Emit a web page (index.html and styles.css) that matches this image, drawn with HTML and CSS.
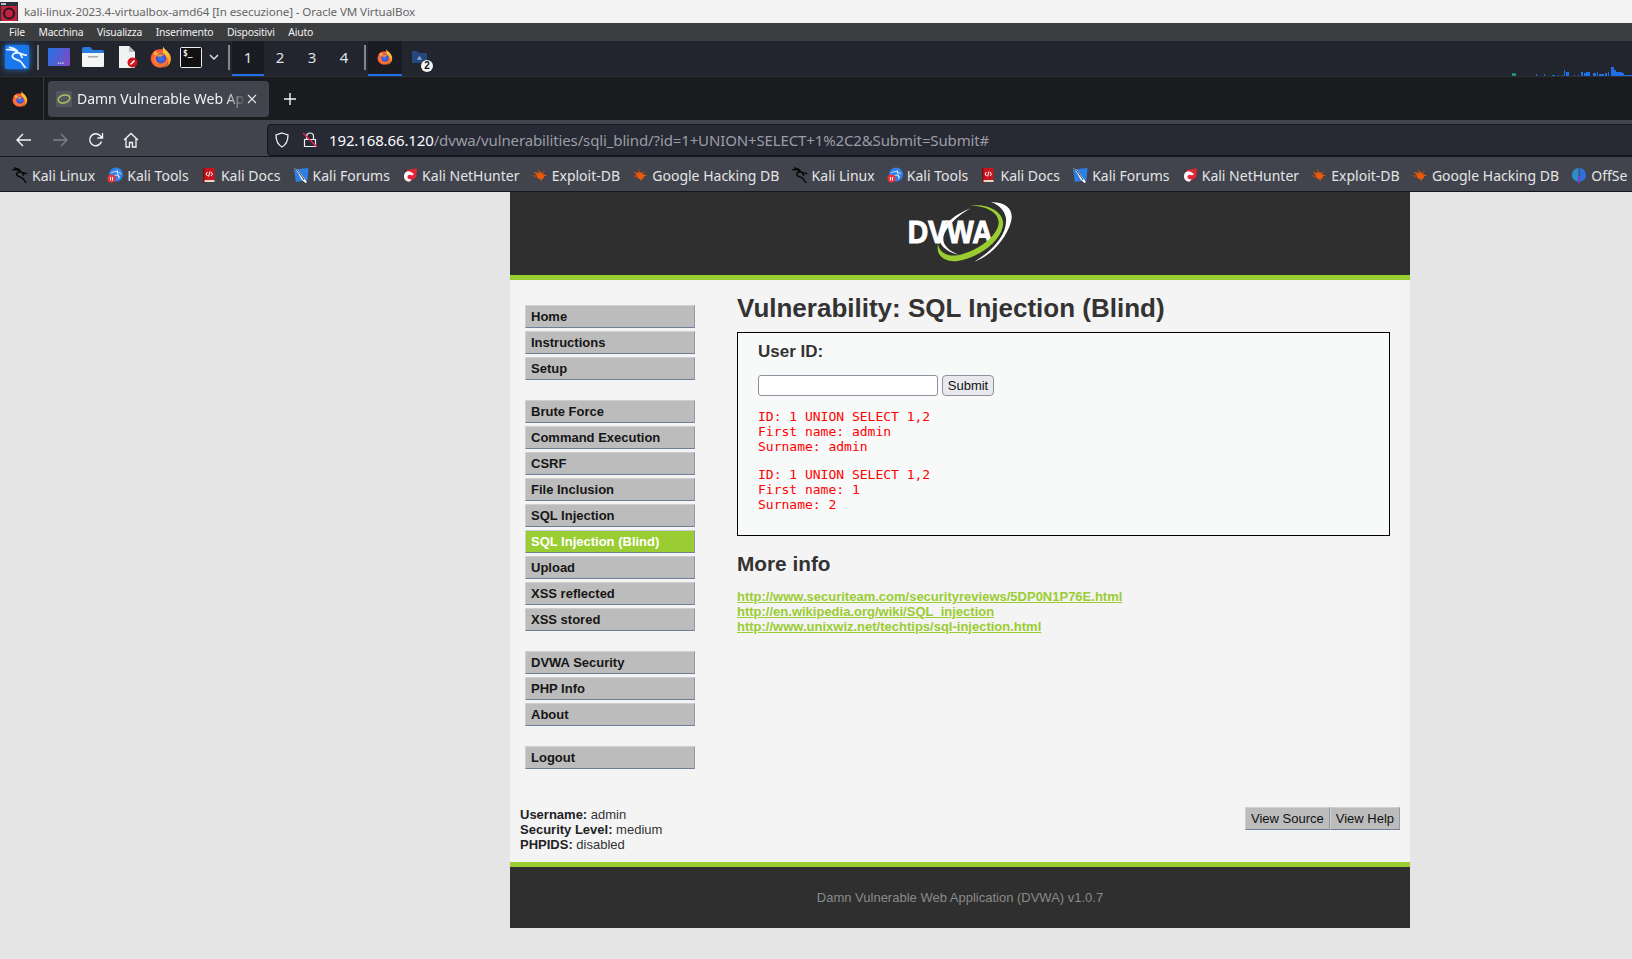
FILE: index.html
```html
<!DOCTYPE html>
<html lang="it">
<head>
<meta charset="utf-8">
<title>kali-linux-2023.4-virtualbox-amd64</title>
<link rel="stylesheet" href="styles.css">
</head>
<body>
<svg class="defs" width="0" height="0" aria-hidden="true">
  <defs>
    <radialGradient id="fxOuter" cx="0.5" cy="0.55" r="0.65">
      <stop offset="0" stop-color="#ff9a2a"/><stop offset="0.6" stop-color="#ff6a35"/><stop offset="1" stop-color="#e22b50"/>
    </radialGradient>
    <linearGradient id="fxFlame" x1="0" y1="0" x2="0" y2="1">
      <stop offset="0" stop-color="#ffd53a"/><stop offset="1" stop-color="#ff8f1e"/>
    </linearGradient>
    <radialGradient id="fxInner" cx="0.5" cy="0.5" r="0.6">
      <stop offset="0" stop-color="#3f7ff0"/><stop offset="1" stop-color="#3a3fc0"/>
    </radialGradient>
    <linearGradient id="deskGrad" x1="0" y1="0.3" x2="1" y2="0.7">
      <stop offset="0" stop-color="#2a6fe2"/><stop offset="1" stop-color="#7a4cc4"/>
    </linearGradient>
    <symbol id="firefox" viewBox="0 0 24 24">
      <circle cx="11" cy="13.500" r="10.300" fill="url(#fxOuter)"/>
      <path d="M14.500 .5c.5 3 4.500 4 7 8.500 2.300 4.500 1.500 9-1.500 12-1.800 1.800-4 2.500-6 2.500 4-1 6.500-4 6-8-.5-4-4-5-5.500-8C14 5.500 13.500 3 14.500 .5z" fill="url(#fxFlame)"/>
      <path d="M3.500 8c.8-1.700 2-2.800 3.500-3.500L6.800 7.500l3.500.5L6 10.500z" fill="#ffb32a"/>
      <circle cx="12" cy="13.500" r="5.600" fill="url(#fxInner)"/>
      <path d="M6.500 11c2.500-2.500 6.500-3 9-1.300l-3.500 1.800c-2 .5-4 0-5.500-.5z" fill="#ff8a3a"/>
    </symbol>
    <symbol id="dragon" viewBox="0 0 24 24">
      <path d="M1 4C6 3.500 11 5 14 7.500c2.500 1.500 5 1.800 8 2.500M14 7.500C10 7 6.500 8.500 7 11.500c.5 3 6 3 9 5.500 2 1.700 2.500 4 5 6.500M4 1.500C7 2 10 3 12 5M15 8c1 1.500 2 3 2.500 4.500" fill="none" stroke="currentColor" stroke-width="2" stroke-linecap="round"/>
    </symbol>
    <symbol id="bug" viewBox="0 0 20 20">
      <path d="M2 6l5 1.500C9 6 12 6.500 14 9l5 2-4 .5c0 2.500-1.500 4-3.500 3.500l1 3-3-3C7 14.500 5.500 12.500 6 10z" fill="#e8590c"/>
      <path d="M1 11l5-1-1 3zM8 2l2 4.500L7.500 6zM16 5l-2 3.500-1.500-1.500z" fill="#c2490c"/>
    </symbol>
    <symbol id="tools" viewBox="0 0 16 16">
      <circle cx="9" cy="7.500" r="7" fill="#2f80e8"/>
      <path d="M4 6c3-2 7-2 10 1M7 9c2-1.500 4-1 6 1M10 3l2 9" stroke="#cfe3fb" fill="none" stroke-width="1"/>
      <circle cx="4.500" cy="11.500" r="4" fill="#e33"/>
      <path d="M3 10h1v3.500H3zM5 10h1v3.500H5z" fill="#fff"/>
    </symbol>
    <symbol id="docs" viewBox="0 0 16 16">
      <path d="M3 1h10.500v12H3z" fill="#c8141c"/>
      <path d="M3 13h10.500v2H3z" fill="#e9d9c8"/>
      <path d="M2 1h1.500v15H2z" fill="#7a1015"/>
      <path d="M6.500 5L5 7l1.500 2M10 5l1.500 2L10 9M9 4.500L7.500 9.500" stroke="#fff" fill="none" stroke-width="1"/>
    </symbol>
    <symbol id="forums" viewBox="0 0 16 16">
      <path d="M1 2.500L15.500 1l-1 12L3 15z" fill="#2d7fe6"/>
      <path d="M1 1l4 2 6 8 3 4-1.500 1-4-3.500-3-6z" fill="#fff"/>
      <path d="M2 2l3 2 5 7 1 2" stroke="#222" stroke-width=".9" fill="none"/>
    </symbol>
    <symbol id="hunter" viewBox="0 0 16 16">
      <path d="M4 3l11-1.500-1 9L7 15 2 12z" fill="#e32636"/>
      <path d="M2 9c0-4 4-6 7-4l3 2-2 1.500C8 7 5.500 7.500 5.500 10c0 2 2 2.500 4 2L8 14.500C5 15 2 13 2 9z" fill="#fff"/>
      <path d="M1 2l4 1-1 2z" fill="#333"/>
    </symbol>
    <symbol id="offsec" viewBox="0 0 16 16">
      <path d="M7.500 1C3 1.500 1 4.500 1 8s2 6 6.500 6.500z" fill="#2d8fc4"/>
      <path d="M8.500 1C13 1.500 15 4.500 15 8s-2 6-6.500 6.500z" fill="#2f6fd8"/>
      <path d="M7 9h2v7H7z" fill="#7a3fd0"/>
    </symbol>
  </defs>
</svg>

<header class="titlebar">
  <svg class="vbox" width="18" height="19" viewBox="0 0 18 19"><rect width="18" height="19" fill="#2a2f38"/><rect x="1" y="4" width="16" height="15" fill="#c4213f"/><circle cx="9" cy="11.500" r="5" fill="none" stroke="#1c1c20" stroke-width="2"/><rect x="1" y="1" width="5" height="2" fill="#bbb"/></svg>
  <span class="titletext">kali-linux-2023.4-virtualbox-amd64 [In esecuzione] - Oracle VM VirtualBox</span>
</header>
<nav class="menubar">
  <span>File</span><span>Macchina</span><span>Visualizza</span><span>Inserimento</span><span>Dispositivi</span><span>Aiuto</span>
</nav>

<div class="panel">
  <div class="launcher">
    <svg class="kalibtn" width="24" height="24"><rect width="24" height="24" rx="1.500" fill="#1a78ee"/><use href="#dragon" width="22" height="22" x="1" y="1"/></svg>
    <i class="vsep"></i>
    <svg class="pi desk" width="22" height="18" viewBox="0 0 22 18"><rect width="22" height="18" rx="1" fill="url(#deskGrad)"/><path d="M10 14.500h1.200v1.200H10zM12.200 14.500h1.200v1.200h-1.200zM14.400 14.500h1.200v1.200h-1.200z" fill="#e6ebff"/></svg>
    <svg class="pi files" width="22" height="20" viewBox="0 0 22 20"><path d="M0 2a2 2 0 0 1 2-2h6l3 3h9a2 2 0 0 1 2 2v3H0z" fill="#2a7be0"/><path d="M0 6h22v13a1 1 0 0 1-1 1H1a1 1 0 0 1-1-1z" fill="#f4f4f4"/><rect x="6" y="9" width="10" height="1.500" fill="#aaa"/></svg>
    <svg class="pi doc" width="20" height="22" viewBox="0 0 20 22"><path d="M1 0h10l6 6v15a1 1 0 0 1-1 1H1z" fill="#f2f2f2"/><path d="M11 0l6 6h-6z" fill="#bbb"/><circle cx="14.500" cy="16.500" r="5" fill="#d0141c"/><path d="M12.500 18.500l4-4" stroke="#fff" stroke-width="1.600"/></svg>
    <svg class="pi fxi" width="22" height="22"><use href="#firefox"/></svg>
    <svg class="pi term" width="22" height="21" viewBox="0 0 22 21"><rect x=".5" y=".5" width="21" height="20" rx="1" fill="#111" stroke="#eee"/><text class="termtext" x="3" y="9">$_</text></svg>
    <svg class="pi chev" width="10" height="6" viewBox="0 0 10 6"><path d="M1 1l4 4 4-4" fill="none" stroke="#ddd" stroke-width="1.500"/></svg>
    <i class="vsep sep2"></i>
  </div>
  <div class="spaces">
    <span class="space on">1</span><span class="space">2</span><span class="space">3</span><span class="space">4</span>
  </div>
  <div class="sep3wrap"><i class="vsep sep3"></i></div>
  <div class="task on"><svg width="16" height="16"><use href="#firefox"/></svg></div>
  <div class="task folder">
    <svg width="15" height="12" viewBox="0 0 15 12"><path d="M0 1a1 1 0 0 1 1-1h4l2 2h7a1 1 0 0 1 1 1v8a1 1 0 0 1-1 1H1a1 1 0 0 1-1-1z" fill="#24477f"/><path d="M7.500 5l2 2v2h-4V7z" fill="#7f9ac8"/></svg>
    <span class="badge">2</span>
  </div>
  <svg class="netgraph" width="120" height="9" viewBox="0 0 120 9"><rect x="0" y="6.500" width="4" height="2" fill="#1abc9c"/><path d="M24 7h1v2h-1zM32 7h1v2h-1zM40 8h3v1h-3zM46 8h1v1h-1zM50 8h1v1h-1zM52 3h1v6h-1zM54 5h3v4h-3zM62 8h1v1h-1zM66 8h1v1h-1zM69 5h2v4h-2zM72 6h2v3h-2zM74 5h4v4h-4zM81 6h3v3h-3zM85 5h1v4h-1zM87 7h5v2h-5zM93 6h2v3h-2zM96 5h1v4h-1zM99 0h3v9h-3zM102 3h2v6h-2zM104 5h6v4h-6zM110 6h2v3h-2zM112 8h8v1h-8z" fill="#1f6fe8"/></svg>
</div>

<div class="tabbar">
  <svg class="tabfx" width="16" height="16"><use href="#firefox"/></svg>
  <i class="tabline"></i>
  <div class="tab">
    <span class="favicon"><svg width="16" height="16" viewBox="0 0 16 16"><rect width="16" height="16" rx="2" fill="#55575e"/><ellipse cx="8" cy="8" rx="6" ry="3.800" transform="rotate(-15 8 8)" fill="none" stroke="#a6c65a" stroke-width="1.500"/></svg></span>
    <span class="tabtitle">Damn Vulnerable Web Ap</span>
    <svg class="tabx" width="10" height="10" viewBox="0 0 10 10"><path d="M1 1l8 8M9 1l-8 8" stroke="#e8e8ea" stroke-width="1.100"/></svg>
  </div>
  <svg class="plus" width="12" height="12" viewBox="0 0 12 12"><path d="M6 0v12M0 6h12" stroke="#f5f5f5" stroke-width="1.400"/></svg>
</div>

<div class="navbar">
  <svg class="nv" width="16" height="14" viewBox="0 0 16 14"><path d="M15 7H1.500M7 1L1 7l6 6" fill="none" stroke="#f4f4f6" stroke-width="1.400"/></svg>
  <svg class="nv" width="16" height="14" viewBox="0 0 16 14"><path d="M1 7h13.500M9 1l6 6-6 6" fill="none" stroke="#80828a" stroke-width="1.400"/></svg>
  <svg class="nv" width="16" height="16" viewBox="0 0 16 16"><path d="M13.500 9.500A6 6 0 1 1 12 3.500L14 5.500M14.500 1v5h-5" fill="none" stroke="#f4f4f6" stroke-width="1.400"/></svg>
  <svg class="nv" width="16" height="16" viewBox="0 0 16 16"><path d="M1 8l7-6.500L15 8M3 6.500V15h3.500v-4.500h3V15H13V6.500" fill="none" stroke="#f4f4f6" stroke-width="1.300"/></svg>
  <div class="urlbar">
    <svg class="shield" width="14" height="16" viewBox="0 0 14 16"><path d="M7 1l6 2c0 5.500-1.500 9.500-6 12C2.500 12.500 1 8.500 1 3z" fill="none" stroke="#f0f0f2" stroke-width="1.300"/></svg>
    <svg class="lock" width="14" height="16" viewBox="0 0 14 16"><path d="M3.500 7V4.500a3.500 3.500 0 0 1 7 0V7M1.500 7.500h11v7h-11z" fill="none" stroke="#f0f0f2" stroke-width="1.200"/><path d="M0 1l14 14" stroke="#e22850" stroke-width="1.300"/></svg>
    <span class="url"><b>192.168.66.120</b>/dvwa/vulnerabilities/sqli_blind/?id=1+UNION+SELECT+1%2C2&amp;Submit=Submit#</span>
  </div>
</div>

<div class="bookmarks">
  <a class="bm"><svg class="blk" width="16" height="16"><use href="#dragon"/></svg>Kali Linux</a>
  <a class="bm"><svg width="16" height="16"><use href="#tools"/></svg>Kali Tools</a>
  <a class="bm"><svg width="16" height="16"><use href="#docs"/></svg>Kali Docs</a>
  <a class="bm"><svg width="16" height="16"><use href="#forums"/></svg>Kali Forums</a>
  <a class="bm"><svg width="16" height="16"><use href="#hunter"/></svg>Kali NetHunter</a>
  <a class="bm"><svg width="16" height="16"><use href="#bug"/></svg>Exploit-DB</a>
  <a class="bm"><svg width="16" height="16"><use href="#bug"/></svg>Google Hacking DB</a>
  <a class="bm"><svg class="blk" width="16" height="16"><use href="#dragon"/></svg>Kali Linux</a>
  <a class="bm"><svg width="16" height="16"><use href="#tools"/></svg>Kali Tools</a>
  <a class="bm"><svg width="16" height="16"><use href="#docs"/></svg>Kali Docs</a>
  <a class="bm"><svg width="16" height="16"><use href="#forums"/></svg>Kali Forums</a>
  <a class="bm"><svg width="16" height="16"><use href="#hunter"/></svg>Kali NetHunter</a>
  <a class="bm"><svg width="16" height="16"><use href="#bug"/></svg>Exploit-DB</a>
  <a class="bm"><svg width="16" height="16"><use href="#bug"/></svg>Google Hacking DB</a>
  <a class="bm"><svg width="16" height="16"><use href="#offsec"/></svg>OffSe</a>
</div>

<div class="viewport">
  <div class="container">
    <div class="pagehead">
      <svg class="logo" width="108" height="64" viewBox="140 30 324 192">
        <path class="lg-w" d="M335 55C290 70 240 110 240 145 240 170 270 190 300 195 270 185 250 165 252 145 255 115 295 75 335 55Z"/>
        <text class="logotext" x="145" y="160" textLength="255" lengthAdjust="spacingAndGlyphs">DVWA</text>
        <path class="lg-g" d="M335 47C390 40 440 70 430 110 420 160 350 205 295 213 255 218 228 195 236 162 240 190 270 205 310 192 370 175 420 130 418 95 415 65 380 48 335 47Z"/>
        <path class="lg-w" d="M395 37C440 35 465 60 455 95 440 150 390 200 345 215 395 185 445 135 440 85 435 60 420 45 395 37Z"/>
      </svg>
    </div>
    <div class="pagebody">
      <div class="columns">
        <aside class="side">
          <ul class="menu">
            <li>Home</li><li>Instructions</li><li>Setup</li>
          </ul>
          <ul class="menu">
            <li>Brute Force</li><li>Command Execution</li><li>CSRF</li><li>File Inclusion</li><li>SQL Injection</li><li class="active">SQL Injection (Blind)</li><li>Upload</li><li>XSS reflected</li><li>XSS stored</li>
          </ul>
          <ul class="menu">
            <li>DVWA Security</li><li>PHP Info</li><li>About</li>
          </ul>
          <ul class="menu">
            <li>Logout</li>
          </ul>
        </aside>
        <main class="main">
          <h1>Vulnerability: SQL Injection (Blind)</h1>
          <div class="vbox-area">
            <h3>User ID:</h3>
            <form class="idform">
              <input class="idinput" type="text">
              <button class="submit" type="button">Submit</button>
            </form>
            <pre class="res">ID: 1 UNION SELECT 1,2
First name: admin
Surname: admin</pre>
            <pre class="res">ID: 1 UNION SELECT 1,2
First name: 1
Surname: 2</pre>
          </div>
          <h2>More info</h2>
          <ul class="links">
            <li><a>http://www.securiteam.com/securityreviews/5DP0N1P76E.html</a></li>
            <li><a>http://en.wikipedia.org/wiki/SQL_injection</a></li>
            <li><a>http://www.unixwiz.net/techtips/sql-injection.html</a></li>
          </ul>
        </main>
      </div>
      <div class="foot">
        <div class="status">
          <div><b>Username:</b> admin</div>
          <div><b>Security Level:</b> medium</div>
          <div><b>PHPIDS:</b> disabled</div>
        </div>
        <div class="foot-btns"><span class="fbtn">View Source</span><span class="fbtn">View Help</span></div>
      </div>
    </div>
    <footer class="pagefoot">Damn Vulnerable Web Application (DVWA) v1.0.7</footer>
  </div>
</div>
</body>
</html>
```
FILE: styles.css
```css
* { box-sizing: border-box; }
html, body { margin: 0; padding: 0; }
body {
  width: 1632px;
  height: 959px;
  overflow: hidden;
  background: #e5e5e5;
  font-family: "Liberation Sans", Arial, sans-serif;
}
.defs { display: block; height: 0; }

.titlebar {
  height: 23px;
  background: #f3f3f3;
  display: flex;
  align-items: center;
  gap: 6px;
}
.vbox { flex: none; }
.titletext {
  font: 11.6px "Noto Sans", sans-serif;
  letter-spacing: -0.1px;
  color: #666;
}
.menubar {
  height: 18px;
  background: #3c3d3f;
  display: flex;
  align-items: center;
  padding-left: 9px;
  gap: 13.6px;
  font: 10.4px "Noto Sans", sans-serif;
  letter-spacing: -0.2px;
  color: #f2f2f2;
}

.panel {
  height: 36px;
  background: #22252e;
  border-bottom: 1px solid #2e3036;
  display: flex;
  align-items: stretch;
}
.launcher { display: flex; align-items: center; padding: 0 0 3px 5px; }
.kalibtn { color: #eaf4ff; filter: drop-shadow(0 0 3px #1f7fe8); }
.vsep { display: block; width: 2px; height: 25px; background: #85878c; margin-left: 8px; }
.pi { display: block; }
.desk { margin-left: 9px; }
.files { margin-left: 12px; }
.doc { margin-left: 14px; }
.fxi { margin-left: 12px; }
.term { margin-left: 8px; }
.chev { margin-left: 7px; }
.sep2 { margin-left: 9px; }
.termtext { font: bold 8px "DejaVu Sans Mono", monospace; fill: #f0f0f0; }
.spaces { display: flex; margin-left: 2px; }
.space {
  width: 32px;
  height: 35px;
  display: flex;
  align-items: center;
  justify-content: center;
  padding-bottom: 3px;
  font: 15px "Noto Sans", sans-serif;
  color: #dfe3ea;
}
.space.on { background: #1a1c22; border-bottom: 2px solid #1f6fe8; padding-bottom: 1px; }
.sep3wrap { display: flex; align-items: center; padding-bottom: 3px; }
.sep3 { margin-left: 4px; }
.task {
  width: 34px;
  height: 35px;
  display: flex;
  align-items: center;
  justify-content: center;
  position: relative;
  padding-bottom: 3px;
}
.task.on { margin-left: 2px; background: #1a1c22; border-bottom: 2px solid #1f6fe8; padding-bottom: 1px; }
.badge {
  position: absolute;
  left: 19px;
  top: 19px;
  width: 12px;
  height: 12px;
  border-radius: 50%;
  background: #f4f4f4;
  color: #111;
  font: bold 10px/12px "Liberation Sans", sans-serif;
  text-align: center;
}
.netgraph { margin-left: auto; align-self: flex-end; }

.tabbar {
  height: 43px;
  background: #1a1b1f;
  display: flex;
  align-items: center;
  padding-left: 12px;
}
.tabline { display: block; width: 1px; height: 43px; background: #3a3b40; margin-left: 15px; }
.tab {
  width: 221px;
  height: 36px;
  margin-left: 4px;
  background: #42444d;
  border-radius: 4px;
  display: flex;
  align-items: center;
  padding-left: 8px;
  position: relative;
}
.favicon { display: block; width: 16px; height: 16px; flex: none; }
.tabtitle {
  margin-left: 5px;
  width: 169px;
  overflow: hidden;
  white-space: nowrap;
  font: 14px "Noto Sans", sans-serif;
  letter-spacing: -0.05px;
  color: #f1f1f3;
  -webkit-mask-image: linear-gradient(to right, #000 88%, transparent 100%);
  mask-image: linear-gradient(to right, #000 88%, transparent 100%);
}
.tabx { margin-left: 1px; flex: none; }
.plus { margin-left: 15px; }

.navbar {
  height: 36px;
  background: #42444d;
  display: flex;
  align-items: center;
  padding: 4px 0 0 16px;
}
.nv { display: block; margin-right: 20px; flex: none; }
.nv:nth-child(3) { margin-right: 19px; }
.urlbar {
  flex: 1;
  height: 32px;
  margin-left: 108px;
  margin-right: -8px;
  background: #272a35;
  border: 1px solid #15161a;
  border-radius: 4px;
  display: flex;
  align-items: center;
  padding-left: 7px;
}
.lock { margin-left: 14px; }
.url {
  margin-left: 12px;
  font: 15px "Noto Sans", sans-serif;
  letter-spacing: -0.13px;
  color: #9c9da3;
  white-space: nowrap;
}
.url b { font-weight: 400; color: #fbfbfe; }

.bookmarks {
  height: 36px;
  background: #42444d;
  border-bottom: 1px solid #15161a;
  border-top: 1px solid #15161a;
  display: flex;
  align-items: center;
  padding: 2px 0 0 12px;
  gap: 12.2px;
  overflow: hidden;
}
.bm {
  display: flex;
  align-items: center;
  gap: 4px;
  flex: none;
  font: 14px "Noto Sans", sans-serif;
  letter-spacing: 0;
  color: #e4e4e6;
}
.blk { color: #050505; }

.viewport { padding-left: 510px; }
.container { width: 900px; }
.pagehead {
  height: 88px;
  background: #2f2f2f;
  border-bottom: 5px solid #9acd32;
  display: flex;
  justify-content: center;
  padding-top: 8px;
}
.logo { display: block; }
.lg-g { fill: #9acd32; }
.lg-w { fill: #fff; }
.logotext {
  font: bold 96px "Liberation Sans", sans-serif;
  fill: #fff;
  stroke: #fff;
  stroke-width: 3px;
}
.pagebody {
  height: 582px;
  background: #f4f4f4;
  display: flex;
  flex-direction: column;
}
.columns { flex: 1; display: flex; }
.side { width: 212px; flex: none; padding: 25px 0 0 15px; }
.menu { list-style: none; margin: 0 0 20px; padding: 0; width: 170px; }
.menu li {
  height: 23px;
  margin-bottom: 3px;
  padding-left: 5px;
  background: #bcbcbc;
  border: 1px solid #cfcfcf;
  border-right-color: #8f9bad;
  border-bottom-color: #6f7f99;
  font: bold 13px/21px "Liberation Sans", sans-serif;
  color: #161616;
}
.menu li:last-child { margin-bottom: 0; }
.menu li.active {
  background: #9acd32;
  color: #fff;
  border-top-color: #c8ccd2;
}
.main { width: 653px; margin-left: 15px; }
h1 {
  margin: 13px 0 9px;
  font: bold 26px/30px "Liberation Sans", sans-serif;
  color: #333;
}
.vbox-area {
  height: 204px;
  background: #f8f9f9;
  border: 1px solid #000;
  padding: 9px 20px;
}
h3 {
  margin: 0 0 13px;
  font: bold 17px/20px "Liberation Sans", sans-serif;
  color: #333;
}
.idform { display: flex; align-items: center; gap: 4px; height: 21px; margin-bottom: 13px; }
.idinput {
  width: 180px;
  height: 21px;
  border: 1px solid #8f8f9d;
  border-radius: 3px;
  background: #fff;
  padding: 0;
}
.submit {
  width: 52px;
  height: 21px;
  padding: 0;
  border: 1px solid #8f8f9d;
  border-radius: 4px;
  background: #e9e9ed;
  font: 13px "Liberation Sans", sans-serif;
  color: #111;
}
.res {
  margin: 0 0 13px;
  font: 13px/15px "DejaVu Sans Mono", monospace;
  color: #f00;
}
h2 {
  margin: 16px 0 13px;
  font: bold 20.8px/24px "Liberation Sans", sans-serif;
  color: #333;
}
.links { list-style: none; margin: 0; padding: 0; }
.links li { font: bold 13px/15px "Liberation Sans", sans-serif; }
.links a { color: #9acd32; text-decoration: underline; }
.foot {
  height: 55px;
  padding: 0 10px;
  display: flex;
  justify-content: space-between;
}
.status { font: 13px/15px "Liberation Sans", sans-serif; color: #333; }
.status b { color: #222; }
.foot-btns { display: flex; align-self: flex-start; }
.fbtn {
  height: 23px;
  padding: 0 5px;
  background: #bcbcbc;
  border: 1px solid #cfcfcf;
  border-right-color: #8f9bad;
  border-bottom-color: #6f7f99;
  font: 13px/21px "Liberation Sans", sans-serif;
  color: #111;
}
.pagefoot {
  height: 66px;
  background: #2f2f2f;
  border-top: 5px solid #9acd32;
  display: flex;
  align-items: center;
  justify-content: center;
  font: 13px "Liberation Sans", sans-serif;
  color: #8a8a8a;
}
```
